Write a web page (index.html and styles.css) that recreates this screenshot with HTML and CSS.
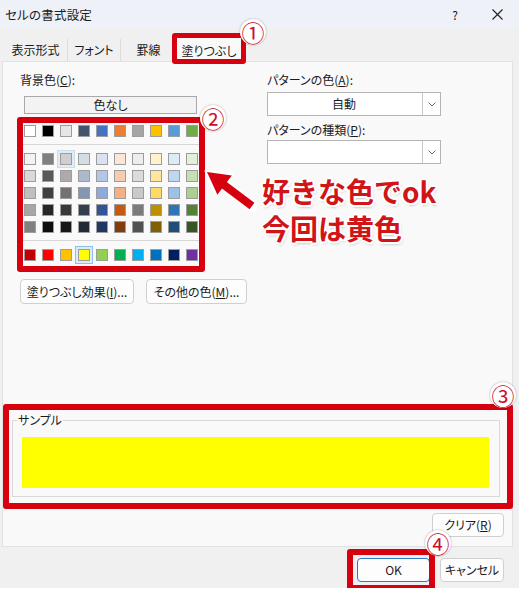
FILE: index.html
```html
<!DOCTYPE html>
<html lang="ja">
<head>
<meta charset="utf-8">
<link rel="stylesheet" href="styles.css">
</head>
<body>
<div class="dialog">
  <div class="titlebar">
    <span class="title">セルの書式設定</span>
    <span class="help">?</span>
    <span class="close"><svg width="11" height="11" viewBox="0 0 11 11"><path d="M0.5 0.5L10.5 10.5M10.5 0.5L0.5 10.5" stroke="#1f1f1f" stroke-width="1.1" fill="none"/></svg></span>
  </div>
  <div class="tabs">
    <div class="tab t1">表示形式</div>
    <div class="tab t2">フォント</div>
    <div class="tab t3">罫線</div>
    <div class="tab t4 active">塗りつぶし</div>
  </div>
  <div class="panel">
    <div class="top">
      <div class="left">
        <div class="label">背景色(<u>C</u>):</div>
        <div class="nocolor">色なし</div>
        <div class="palette">
          <div class="prow">
            <i style="background:#FFFFFF"></i><i style="background:#000000"></i><i style="background:#E7E6E6"></i><i style="background:#44546A"></i><i style="background:#4472C4"></i><i style="background:#ED7D31"></i><i style="background:#A5A5A5"></i><i style="background:#FFC000"></i><i style="background:#5B9BD5"></i><i style="background:#70AD47"></i>
          </div>
          <div class="psep"></div>
          <div class="tints">
            <div class="prow">
              <i style="background:#F2F2F2"></i><i style="background:#7F7F7F"></i><i class="hover" style="background:#D0CECE"></i><i style="background:#D6DCE4"></i><i style="background:#D9E1F2"></i><i style="background:#FCE4D6"></i><i style="background:#EDEDED"></i><i style="background:#FFF2CC"></i><i style="background:#DDEBF7"></i><i style="background:#E2EFDA"></i>
            </div>
            <div class="prow">
              <i style="background:#D9D9D9"></i><i style="background:#595959"></i><i style="background:#AEAAAA"></i><i style="background:#ACB9CA"></i><i style="background:#B4C6E7"></i><i style="background:#F8CBAD"></i><i style="background:#DBDBDB"></i><i style="background:#FFE699"></i><i style="background:#BDD7EE"></i><i style="background:#C6E0B4"></i>
            </div>
            <div class="prow">
              <i style="background:#BFBFBF"></i><i style="background:#404040"></i><i style="background:#757171"></i><i style="background:#8497B0"></i><i style="background:#8EA9DB"></i><i style="background:#F4B084"></i><i style="background:#C9C9C9"></i><i style="background:#FFD966"></i><i style="background:#9BC2E6"></i><i style="background:#A9D08E"></i>
            </div>
            <div class="prow">
              <i style="background:#A6A6A6"></i><i style="background:#262626"></i><i style="background:#3A3838"></i><i style="background:#333F4F"></i><i style="background:#305496"></i><i style="background:#C65911"></i><i style="background:#7B7B7B"></i><i style="background:#BF8F00"></i><i style="background:#2F75B5"></i><i style="background:#548235"></i>
            </div>
            <div class="prow">
              <i style="background:#808080"></i><i style="background:#0D0D0D"></i><i style="background:#161616"></i><i style="background:#222B35"></i><i style="background:#203764"></i><i style="background:#833C0C"></i><i style="background:#525252"></i><i style="background:#806000"></i><i style="background:#1F4E78"></i><i style="background:#375623"></i>
            </div>
          </div>
          <div class="psep"></div>
          <div class="prow">
            <i style="background:#C00000"></i><i style="background:#FF0000"></i><i style="background:#FFC000"></i><i class="sel" style="background:#FFFF00"></i><i style="background:#92D050"></i><i style="background:#00B050"></i><i style="background:#00B0F0"></i><i style="background:#0070C0"></i><i style="background:#002060"></i><i style="background:#7030A0"></i>
          </div>
        </div>
        <div class="btnrow">
          <div class="btn b-effect">塗りつぶし効果(<u>I</u>)...</div>
          <div class="btn b-more">その他の色(<u>M</u>)...</div>
        </div>
      </div>
      <div class="right">
        <div class="label">パターンの色(<u>A</u>):</div>
        <div class="combo"><span class="cval">自動</span><span class="carrow"><svg width="8" height="5" viewBox="0 0 8 5"><path d="M0.5 0.5L4 4L7.5 0.5" stroke="#606060" fill="none" stroke-width="0.9"/></svg></span></div>
        <div class="label l2">パターンの種類(<u>P</u>):</div>
        <div class="combo c2"><span class="cval"></span><span class="carrow"><svg width="8" height="5" viewBox="0 0 8 5"><path d="M0.5 0.5L4 4L7.5 0.5" stroke="#606060" fill="none" stroke-width="0.9"/></svg></span></div>
      </div>
    </div>
    <fieldset class="sample">
      <legend>サンプル</legend>
      <div class="yellow"></div>
    </fieldset>
    <div class="clearrow"><div class="btn b-clear">クリア(<u>R</u>)</div></div>
  </div>
  <div class="footer">
    <div class="btn b-ok">OK</div>
    <div class="btn b-cancel">キャンセル</div>
  </div>

  <div class="redbox rb1"></div>
  <div class="redbox rb2"></div>
  <div class="redbox rb3"></div>
  <div class="redbox rb4"></div>
  <div class="num n1">①</div>
  <div class="num n2">②</div>
  <div class="num n3">③</div>
  <div class="num n4">④</div>
  <svg class="arrow" width="70" height="60" viewBox="200 160 70 60">
    <path d="M252 206 L222 183.5" stroke="#fff" stroke-width="12" stroke-linecap="round" fill="none"/>
    <polygon points="206,171 232.5,174.8 217,195.4" fill="#fff" stroke="#fff" stroke-width="3" stroke-linejoin="round"/>
    <path d="M252 206 L222 183.5" stroke="#d7000f" stroke-width="8" fill="none"/>
    <polygon points="207,172 231.8,175.6 217.4,194.8" fill="#d7000f"/>
  </svg>
  <div class="note">好きな色でok<br>今回は黄色</div>
</div>
</body>
</html>
```
FILE: styles.css
```css
* { box-sizing: border-box; }
body {
  margin: 0;
  background: #ffffff;
  font-family: "Noto Sans CJK JP", "Noto Sans", sans-serif;
  font-size: 12px;
  color: #1b1b1b;
  font-feature-settings: "palt";
}
u { text-underline-offset: 1px; }

.dialog {
  position: relative;
  width: 519px;
  height: 588px;
  background: #f0f0f0;
  display: flex;
  flex-direction: column;
}

.titlebar {
  height: 28px;
  background: #eef1f8;
  display: flex;
  align-items: center;
  padding-left: 5px;
}
.title { font-size: 12.5px; letter-spacing: 0.2px; flex: 1; }
.help { width: 14px; text-align: center; margin-right: 30px; font-size: 12px; }
.close { width: 11px; height: 11px; display: flex; margin-right: 16px; }

.tabs {
  height: 33px;
  display: flex;
  align-items: flex-end;
  padding-left: 4px;
}
.tab {
  height: 22px;
  line-height: 22px;
  text-align: center;
  border-right: 1px solid #dcdcdc;
}
.t1 { width: 64px; }
.t2 { width: 53px; }
.t3 { width: 55px; border-right: none; }
.t4 { width: 66px; }
.tab.active {
  height: 29px;
  padding-top: 6px;
  background: #f9f9f9;
  border: 1px solid #e2e2e2;
  border-bottom: none;
  position: relative;
  top: 1px;
  z-index: 1;
}

.panel {
  margin-left: 2px;
  width: 511px;
  height: 486px;
  background: #f9f9f9;
  border: 1px solid #e2e2e2;
  display: flex;
  flex-direction: column;
}
.top { display: flex; }
.left { width: 247px; padding-left: 17px; padding-top: 10px; }
.right { margin-left: 17px; padding-top: 10px; }

.label { height: 16px; line-height: 16px; }
.nocolor {
  margin-left: 4px;
  margin-top: 8px;
  width: 173px;
  height: 18px;
  line-height: 16px;
  text-align: center;
  background: #f3f3f3;
  border: 1px solid #a9a9a9;
}

.palette { margin-top: 11px; padding-left: 4px; }
.prow { display: flex; gap: 6px; height: 12px; }
.prow i {
  display: block;
  width: 12px;
  height: 12px;
  border: 1px solid #9d9d9d;
}
.prow i.hover {
  outline: 1px solid #c9ddef;
  outline-offset: 2px;
  box-shadow: 0 0 0 2px #e2ecf6;
}
.prow i.sel {
  outline: 1px solid #8fc0ea;
  outline-offset: 2px;
  box-shadow: 0 0 0 2px #dcebf8;
}
.psep {
  margin: 7px 0 8px -2px;
  width: 179px;
  height: 1px;
  background: #d7d7d7;
}
.tints { display: flex; flex-direction: column; gap: 5px; }
.palette .psep:last-of-type { margin: 8px 0 7px -2px; }

.btn {
  height: 25px;
  line-height: 23px;
  text-align: center;
  background: #fdfdfd;
  border: 1px solid #d0d0d0;
  border-radius: 4px;
}
.btnrow { display: flex; gap: 12px; margin-top: 18px; }
.b-effect { width: 114px; }
.b-more { width: 101px; }

.combo {
  margin-top: 4px;
  width: 174px;
  height: 24px;
  background: #ffffff;
  border: 1px solid #b4b4b4;
  display: flex;
}
.cval { flex: 1; text-align: center; line-height: 22px; padding-right: 2px; }
.carrow {
  width: 18px;
  border-left: 1px solid #c8c8c8;
  display: flex;
  align-items: center;
  justify-content: center;
}
.l2 { margin-top: 6px; }
.c2 { margin-top: 2px; }

.sample {
  margin: auto 12px 0 9px;
  padding: 0;
  border: 1px solid #d9d9d9;
  min-width: 0;
}
.sample legend {
  margin-left: 4px;
  padding: 0 1px;
  line-height: 16px;
  height: 16px;
}
.yellow {
  margin: 9px 10px 8px 9px;
  height: 51px;
  background: #ffff00;
}
.clearrow {
  display: flex;
  justify-content: flex-end;
  padding-right: 8px;
  margin-top: 16px;
  margin-bottom: 9px;
}
.b-clear { width: 72px; height: 24px; line-height: 22px; }

.footer {
  flex: 1;
  display: flex;
  justify-content: flex-end;
  gap: 10px;
  padding-top: 11px;
  padding-right: 15px;
}
.b-ok { width: 73px; height: 24px; line-height: 22px; border-color: #2a7ac6; }
.b-cancel { width: 64px; height: 24px; line-height: 22px; }

.redbox {
  position: absolute;
  border: 6px solid #d7000f;
  border-radius: 3px;
  z-index: 2;
}
.rb1 { left: 172px; top: 33px; width: 74px; height: 31px; border-width: 5px; }
.rb2 { left: 17px; top: 117px; width: 188px; height: 155px; }
.rb3 { left: 3px; top: 404px; width: 510px; height: 105px; }
.rb4 { left: 347px; top: 549px; width: 88px; height: 42px; }

.num {
  position: absolute;
  z-index: 3;
  width: 26px;
  height: 26px;
  border-radius: 50%;
  background: #ffffff;
  box-shadow: 0 0 2px rgba(0,0,0,0.35);
  color: #c8102e;
  font-size: 23px;
  line-height: 26px;
  text-align: center;
}
.n1 { left: 240px; top: 19px; }
.n2 { left: 200px; top: 105px; }
.n3 { left: 490px; top: 382px; }
.n4 { left: 425px; top: 530px; }

.arrow { position: absolute; left: 200px; top: 160px; z-index: 3; }

.note {
  position: absolute;
  z-index: 3;
  left: 262px;
  top: 173px;
  font-size: 28px;
  font-weight: 700;
  line-height: 37px;
  color: #d01418;
  font-feature-settings: normal;
  text-shadow:
    -2px 0 0 #fff, 2px 0 0 #fff, 0 -2px 0 #fff, 0 2px 0 #fff,
    -1.5px -1.5px 0 #fff, 1.5px 1.5px 0 #fff, -1.5px 1.5px 0 #fff, 1.5px -1.5px 0 #fff,
    1px 2px 3px rgba(0,0,0,0.35);
}
```
